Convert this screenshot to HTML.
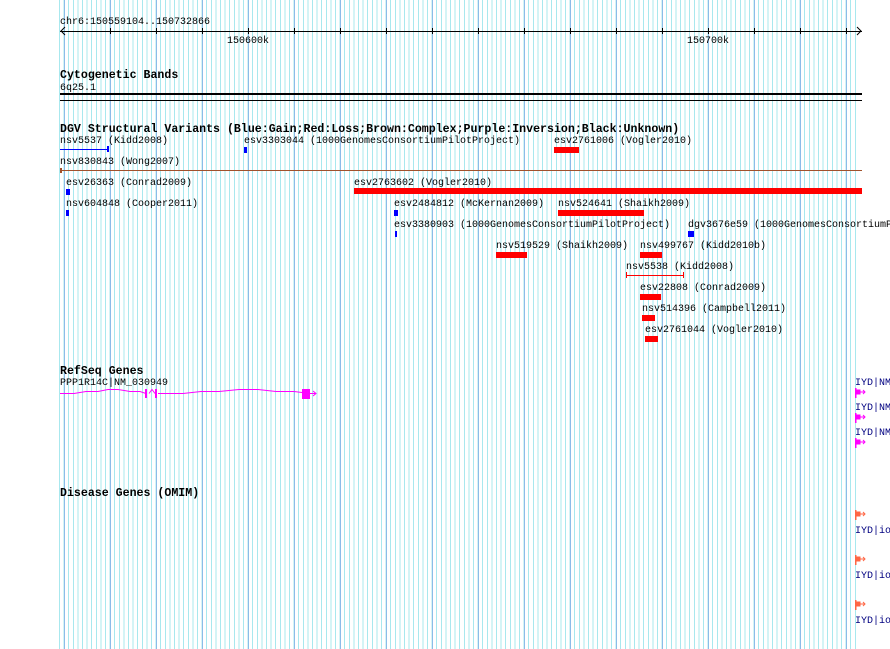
<!DOCTYPE html>
<html><head><meta charset="utf-8"><style>
html,body{margin:0;padding:0;background:#fff;}
#c{position:relative;width:890px;height:649px;overflow:hidden;font-family:"Liberation Mono","DejaVu Sans Mono",monospace;font-size:10px;color:#000;}
#g{position:absolute;left:59.4px;top:0;width:799px;height:649px;
background:repeating-linear-gradient(to right,#a8e8ee 0,#a8e8ee 1px,transparent 1px,transparent 4.6px);}
#g2{position:absolute;left:64px;top:0;width:790px;height:649px;
background:repeating-linear-gradient(to right,#8cbce8 0,#8cbce8 1px,transparent 1px,transparent 46px);}
.t{position:absolute;white-space:nowrap;line-height:12px;margin-top:2px;}
.b{font-weight:bold;font-size:11.6px;}
.r{position:absolute;}
.red{background:#f00;}.blu{background:#00f;}
</style></head><body><div id="c">
<div id="g"></div><div id="g2"></div>
<div class="t" style="left:60px;top:15px">chr6:150559104..150732866</div>
<div class="r" style="left:60px;top:31px;width:802px;height:1px;background:#000"></div>
<svg class="r" style="left:0;top:0" width="890" height="40">
<path d="M65 27 L61 31 L65 35 M857 27 L861 31 L857 35" stroke="#000" fill="none"/>
<g stroke="#000"><path d="M110.5 28v6M156.5 28v6M202.5 28v6M248.5 28v6M294.5 28v6M340.5 28v6M386.5 28v6M432.5 28v6M478.5 28v6M524.5 28v6M570.5 28v6M616.5 28v6M662.5 28v6M708.5 28v6M754.5 28v6M800.5 28v6M846.5 28v6"/></g></svg>
<div class="t" style="left:227px;top:34px">150600k</div>
<div class="t" style="left:687px;top:34px">150700k</div>
<div class="t b" style="left:60px;top:68px">Cytogenetic Bands</div>
<div class="t" style="left:60px;top:81px">6q25.1</div>
<div class="r" style="left:60px;top:93px;width:802px;height:1.5px;background:#000"></div>
<div class="r" style="left:60px;top:99.5px;width:802px;height:1.5px;background:#000"></div>
<div class="t b" style="left:60px;top:122px">DGV Structural Variants (Blue:Gain;Red:Loss;Brown:Complex;Purple:Inversion;Black:Unknown)</div>
<div class="t" style="left:60px;top:134px">nsv5537 (Kidd2008)</div>
<div class="r" style="left:60px;top:149px;width:48px;height:1px;background:#00f"></div>
<div class="r blu" style="left:107px;top:146px;width:2px;height:6px"></div>
<div class="t" style="left:244px;top:134px">esv3303044 (1000GenomesConsortiumPilotProject)</div>
<div class="r blu" style="left:244px;top:147px;width:3px;height:6px"></div>
<div class="t" style="left:554px;top:134px">esv2761006 (Vogler2010)</div>
<div class="r red" style="left:554px;top:147px;width:25px;height:6px"></div>
<div class="t" style="left:60px;top:155px">nsv830843 (Wong2007)</div>
<div class="r" style="left:60px;top:170px;width:802px;height:1px;background:#a0522d"></div>
<div class="r" style="left:60px;top:168px;width:2px;height:5px;background:#a0522d"></div>
<div class="t" style="left:66px;top:176px">esv26363 (Conrad2009)</div>
<div class="r blu" style="left:66px;top:189px;width:4px;height:6px"></div>
<div class="t" style="left:354px;top:176px">esv2763602 (Vogler2010)</div>
<div class="r red" style="left:354px;top:188px;width:508px;height:6px"></div>
<div class="t" style="left:66px;top:197px">nsv604848 (Cooper2011)</div>
<div class="r blu" style="left:66px;top:210px;width:3px;height:6px"></div>
<div class="t" style="left:394px;top:197px">esv2484812 (McKernan2009)</div>
<div class="r blu" style="left:394px;top:210px;width:4px;height:6px"></div>
<div class="t" style="left:558px;top:197px">nsv524641 (Shaikh2009)</div>
<div class="r red" style="left:558px;top:210px;width:86px;height:6px"></div>
<div class="t" style="left:394px;top:218px">esv3380903 (1000GenomesConsortiumPilotProject)</div>
<div class="r blu" style="left:395px;top:231px;width:2px;height:6px"></div>
<div class="t" style="left:688px;top:218px">dgv3676e59 (1000GenomesConsortiumP</div>
<div class="r blu" style="left:688px;top:231px;width:6px;height:6px"></div>
<div class="t" style="left:496px;top:239px">nsv519529 (Shaikh2009)</div>
<div class="r red" style="left:496px;top:252px;width:31px;height:6px"></div>
<div class="t" style="left:640px;top:239px">nsv499767 (Kidd2010b)</div>
<div class="r red" style="left:640px;top:252px;width:22px;height:6px"></div>
<div class="t" style="left:626px;top:260px">nsv5538 (Kidd2008)</div>
<div class="r red" style="left:626px;top:275px;width:58px;height:1px"></div>
<div class="r red" style="left:626px;top:272px;width:1px;height:6px"></div>
<div class="r red" style="left:683px;top:272px;width:1px;height:6px"></div>
<div class="t" style="left:640px;top:281px">esv22808 (Conrad2009)</div>
<div class="r red" style="left:640px;top:294px;width:21px;height:6px"></div>
<div class="t" style="left:642px;top:302px">nsv514396 (Campbell2011)</div>
<div class="r red" style="left:642px;top:315px;width:13px;height:6px"></div>
<div class="t" style="left:645px;top:323px">esv2761044 (Vogler2010)</div>
<div class="r red" style="left:645px;top:336px;width:13px;height:6px"></div>
<div class="t b" style="left:60px;top:364px">RefSeq Genes</div>
<div class="t" style="left:60px;top:376px">PPP1R14C|NM_030949</div>
<svg class="r" style="left:0;top:380px" width="890" height="70">
<g stroke="#f0f" fill="none">
<path d="M60 13.5H74L86 11.5H98L108 9.5H118L130 11.5H140L146 13.5M149 13.5L152 9.5L155 13.5M158 13.5H183L201 11.5H219L239 9.5H258L276 11.5H294L310 13.5H315M313 11L316 13.5L313 16"/>
</g>
<rect x="145" y="9" width="2" height="9" fill="#f0f"/><rect x="155" y="9" width="2" height="9" fill="#f0f"/>
<rect x="302" y="9" width="8" height="10" fill="#f0f"/>
<g fill="#f0f" stroke="#f0f">
<rect x="855" y="8" width="1.5" height="10" stroke="none"/><path d="M856 10H860V14H856z" /><path d="M860 12H865M863 10L865 12L863 14" fill="none"/>
<rect x="855" y="33" width="1.5" height="10" stroke="none"/><path d="M856 35H860V39H856z"/><path d="M860 37H865M863 35L865 37L863 39" fill="none"/>
<rect x="855" y="58" width="1.5" height="10" stroke="none"/><path d="M856 60H860V64H856z"/><path d="M860 62H865M863 60L865 62L863 64" fill="none"/>
</g></svg>
<div class="t" style="left:855px;top:376px;color:#000080">IYD|NM</div>
<div class="t" style="left:855px;top:401px;color:#000080">IYD|NM</div>
<div class="t" style="left:855px;top:426px;color:#000080">IYD|NM</div>
<div class="t b" style="left:60px;top:486px">Disease Genes (OMIM)</div>
<svg class="r" style="left:0;top:500px" width="890" height="120">
<g fill="#f64" stroke="#f64">
<rect x="855" y="10" width="1.5" height="10" stroke="none"/><path d="M856 12H860V16H856z"/><path d="M860 14H865M863 12L865 14L863 16" fill="none"/>
<rect x="855" y="55" width="1.5" height="10" stroke="none"/><path d="M856 57H860V61H856z"/><path d="M860 59H865M863 57L865 59L863 61" fill="none"/>
<rect x="855" y="100" width="1.5" height="10" stroke="none"/><path d="M856 102H860V106H856z"/><path d="M860 104H865M863 102L865 104L863 106" fill="none"/>
</g></svg>
<div class="t" style="left:855px;top:524px;color:#000080">IYD|io</div>
<div class="t" style="left:855px;top:569px;color:#000080">IYD|io</div>
<div class="t" style="left:855px;top:614px;color:#000080">IYD|io</div>
</div></body></html>
